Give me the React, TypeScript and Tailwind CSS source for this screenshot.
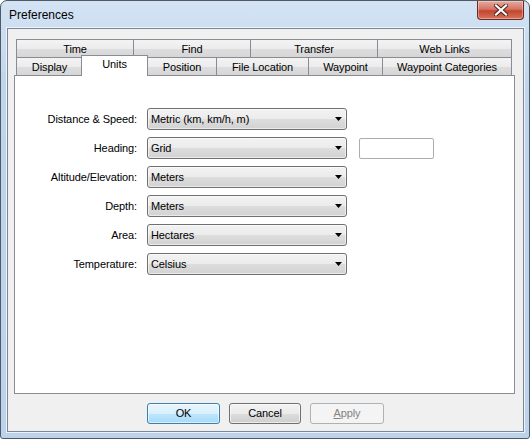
import React from 'react';

const topRow = [
  { label: 'Time', w: 'w-[118px]' },
  { label: 'Find', w: 'w-[118px]' },
  { label: 'Transfer', w: 'w-[128px]' },
  { label: 'Web Links', w: 'w-[135px]' },
];

const bottomRow = [
  { label: 'Display', w: 'w-[67px]' },
  { label: 'Units', w: 'w-[67px]', active: true },
  { label: 'Position', w: 'w-[70px]' },
  { label: 'File Location', w: 'w-[93px]' },
  { label: 'Waypoint', w: 'w-[75px]' },
  { label: 'Waypoint Categories', w: 'w-[130px]' },
];

const fields = [
  { label: 'Distance & Speed:', value: 'Metric (km, km/h, m)' },
  { label: 'Heading:', value: 'Grid', extra: true },
  { label: 'Altitude/Elevation:', value: 'Meters' },
  { label: 'Depth:', value: 'Meters' },
  { label: 'Area:', value: 'Hectares' },
  { label: 'Temperature:', value: 'Celsius' },
];

function Tab({ label, w, first, active }: { label: string; w: string; first?: boolean; active?: boolean }) {
  if (active) {
    return (
      <div
        className={`${w} relative z-10 -mb-px -ml-[2px] flex h-[21px] items-center justify-center border border-b-0 border-[#898c95] bg-white pb-[3px]`}
      >
        {label}
      </div>
    );
  }
  return (
    <div
      className={`${w} ${first ? '' : '-ml-px'} flex h-[18px] items-center justify-center border border-b-0 border-[#898c95] bg-[linear-gradient(#f3f3f3,#ececec_50%,#dedede_51%,#d6d6d6)] pt-px`}
    >
      {label}
    </div>
  );
}

function Combo({ value }: { value: string }) {
  return (
    <div className="flex h-[22px] w-[200px] items-center justify-between rounded-[3px] border border-[#707070] bg-[linear-gradient(#f3f3f3,#ebebeb_50%,#dddddd_51%,#d2d2d2)] pl-[3px] pr-[4px] shadow-[inset_0_0_0_1px_rgba(255,255,255,0.55)]">
      <span>{value}</span>
      <svg width="7" height="4" viewBox="0 0 7 4">
        <path d="M0 0h7L3.5 4z" fill="#000" />
      </svg>
    </div>
  );
}

function CloseButton() {
  return (
    <div className="mr-[5px] flex h-[19px] w-[47px] items-center justify-center rounded-b-[4px] border border-t-0 border-[#6b2a22] bg-[linear-gradient(#e9a99b,#d47566_45%,#c1452f_55%,#d7735a)] shadow-[inset_0_0_0_1px_rgba(255,255,255,0.35)]">
      <svg width="14" height="12" viewBox="0 0 14 12">
        <path d="M2 1.5L12 10.5M12 1.5L2 10.5" stroke="#4a2018" strokeWidth="4" strokeLinecap="square" />
        <path d="M2 1.5L12 10.5M12 1.5L2 10.5" stroke="#ffffff" strokeWidth="2.2" strokeLinecap="square" />
      </svg>
    </div>
  );
}

export default function App() {
  return (
    <div className="flex h-[439px] w-[530px] flex-col rounded-t-[7px] rounded-b-[3px] border border-[#4e5a66] bg-[linear-gradient(180deg,#d3e3f4,#bfd5ec_20%,#bcd3eb)] font-['Liberation_Sans',Arial,sans-serif] text-[11px] tracking-[-0.1px] text-black">
      {/* title bar */}
      <div className="flex h-[27px] items-start justify-between">
        <div className="pl-[8px] pt-[7px] text-[12px] leading-[15px] tracking-normal">Preferences</div>
        <CloseButton />
      </div>

      {/* client area */}
      <div className="mb-[6px] ml-[6px] mr-[5px] flex flex-1 flex-col border border-[#7b8796] bg-[#f0f0f0] pt-[10px] shadow-[0_0_0_1px_#edf3fa]">
        <div className="ml-[6px] w-[501px]">
          <div className="ml-[2px] flex">
            {topRow.map((t, i) => (
              <Tab key={t.label} label={t.label} w={t.w} first={i === 0} />
            ))}
          </div>
          <div className="relative z-10 ml-[2px] flex h-[18px] items-end">
            {bottomRow.map((t, i) => (
              <Tab key={t.label} label={t.label} w={t.w} first={i === 0} active={t.active} />
            ))}
          </div>
          <div className="h-[319px] border border-[#898c95] bg-white pt-[32px]">
            <div className="flex flex-col gap-[7px]">
              {fields.map((f) => (
                <div key={f.label} className="flex items-center">
                  <div className="w-[122px] text-right">{f.label}</div>
                  <div className="ml-[10px]">
                    <Combo value={f.value} />
                  </div>
                  {f.extra && (
                    <div className="ml-[12px] h-[21px] w-[75px] rounded-[2px] border border-[#abadb3] bg-white" />
                  )}
                </div>
              ))}
            </div>
          </div>
        </div>

        <div className="mt-[9px] flex justify-center gap-[9px]">
          <button className="h-[21px] w-[73px] rounded-[3px] border border-[#3c7fb1] bg-[linear-gradient(#eaf6fd,#d9f0fc_50%,#bee6fd_51%,#a7d9f5)] shadow-[inset_0_0_0_1px_rgba(255,255,255,0.6)]">
            OK
          </button>
          <button className="h-[21px] w-[72px] rounded-[3px] border border-[#707070] bg-[linear-gradient(#f2f2f2,#ebebeb_50%,#dddddd_51%,#cfcfcf)] shadow-[inset_0_0_0_1px_rgba(255,255,255,0.6)]">
            Cancel
          </button>
          <button className="h-[21px] w-[74px] rounded-[3px] border border-[#adb2b5] bg-[#f4f4f4] text-[#838383]">
            <span className="underline">A</span>pply
          </button>
        </div>
      </div>
    </div>
  );
}
